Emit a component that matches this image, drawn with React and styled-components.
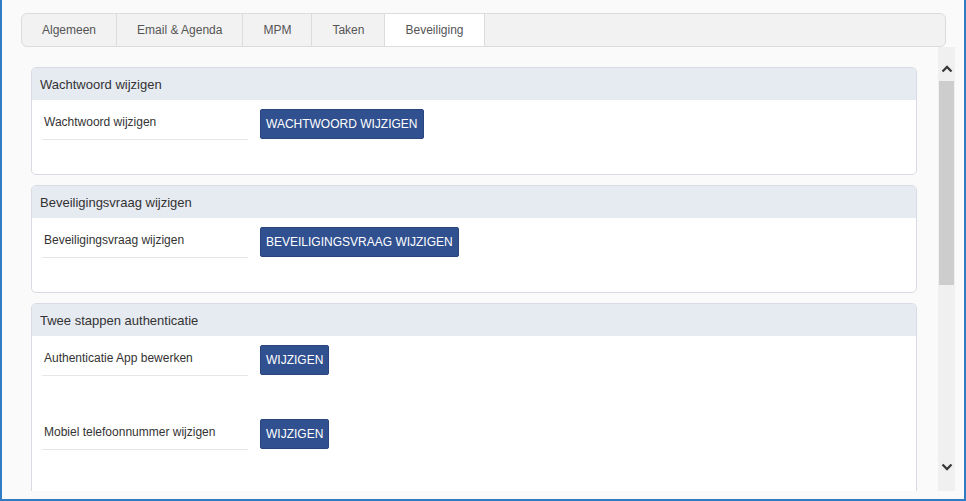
import React from "react";
import styled, { createGlobalStyle } from "styled-components";

const Global = createGlobalStyle`
  html, body { margin: 0; padding: 0; background: #fff; }
  * { box-sizing: border-box; }
  body { font-family: "Liberation Sans", Arial, sans-serif; }
`;

const Frame = styled.div`
  width: 966px;
  height: 501px;
  background: #fafafa;
  border-left: 2px solid #2f7bc4;
  border-right: 2px solid #2f7bc4;
  border-bottom: 2px solid #2f7bc4;
  padding: 13px 9px 0 19px;
  display: flex;
  flex-direction: column;
  overflow: hidden;
`;

const TabBar = styled.div`
  display: flex;
  height: 34px;
  margin-right: 9px;
  background: #f2f2f2;
  border: 1px solid #dcdcdc;
  border-radius: 6px;
  overflow: hidden;
  flex-shrink: 0;
`;

const Tab = styled.div`
  display: flex;
  align-items: center;
  padding: 0 20px;
  font-size: 12px;
  color: #555;
  border-right: 1px solid #dcdcdc;
  background: ${(p) => (p.$active ? "#fff" : "transparent")};
`;

const Body = styled.div`
  flex: 1;
  display: flex;
  min-height: 0;
  padding-bottom: 8px;
`;

const Scroller = styled.div`
  flex: 1;
  overflow: hidden;
  padding: 20px 21px 0 10px;
  display: flex;
  flex-direction: column;
  gap: 10px;
`;

const Panel = styled.section`
  border: 1px solid #d8dce2;
  border-radius: 5px;
  background: #fff;
  flex-shrink: 0;
  overflow: hidden;
`;

const PanelHeader = styled.div`
  height: 32px;
  background: #e6eaf1;
  display: flex;
  align-items: center;
  padding: 0 8px;
  font-size: 13px;
  color: #333;
`;

const PanelBody = styled.div`
  display: flex;
  flex-direction: column;
  gap: 43px;
  padding: 9px 10px ${(p) => p.$bottom}px 10px;
`;

const Row = styled.div`
  display: flex;
  align-items: flex-start;
  gap: 12px;
`;

const Label = styled.div`
  width: 206px;
  height: 31px;
  border-bottom: 1px solid #e6e6e6;
  padding: 6px 0 0 2px;
  font-size: 12px;
  color: #333;
`;

const Button = styled.button`
  height: 30px;
  padding: 0 5px;
  background: #30508f;
  border: 1px solid #2a467f;
  border-radius: 2px;
  color: #fff;
  font-family: "Liberation Sans", Arial, sans-serif;
  font-size: 12px;
  text-transform: uppercase;
  cursor: pointer;
`;

const Scrollbar = styled.div`
  width: 17px;
  background: #f0f0f0;
  display: flex;
  flex-direction: column;
  align-items: center;
  flex-shrink: 0;
`;

const Arrow = styled.div`
  height: 34px;
  width: 100%;
  display: flex;
  justify-content: center;
  align-items: ${(p) => (p.$up ? "flex-end" : "flex-start")};
  padding: ${(p) => (p.$up ? "0 0 8px" : "6px 0 0")};
`;

const Thumb = styled.div`
  width: 15px;
  height: 204px;
  background: #cdcdcd;
`;

const Spacer = styled.div`
  flex: 1;
`;

const Chevron = ({ up }) => (
  <svg width="12" height="8" viewBox="0 0 12 8">
    <path
      d={up ? "M1.5 6.5 L6 2 L10.5 6.5" : "M1.5 1.5 L6 6 L10.5 1.5"}
      fill="none"
      stroke="#3a3a3a"
      strokeWidth="2.3"
    />
  </svg>
);

const sections = [
  { title: "Wachtwoord wijzigen", bottom: 34, rows: [["Wachtwoord wijzigen", "Wachtwoord wijzigen"]] },
  { title: "Beveiligingsvraag wijzigen", bottom: 34, rows: [["Beveiligingsvraag wijzigen", "Beveiligingsvraag wijzigen"]] },
  {
    title: "Twee stappen authenticatie",
    bottom: 60,
    rows: [
      ["Authenticatie App bewerken", "Wijzigen"],
      ["Mobiel telefoonnummer wijzigen", "Wijzigen"],
    ],
  },
];

const tabs = ["Algemeen", "Email & Agenda", "MPM", "Taken", "Beveiliging"];

export default function App() {
  return (
    <>
      <Global />
      <Frame>
        <TabBar>
          {tabs.map((t) => (
            <Tab key={t} $active={t === "Beveiliging"}>
              {t}
            </Tab>
          ))}
        </TabBar>
        <Body>
          <Scroller>
            {sections.map((s) => (
              <Panel key={s.title}>
                <PanelHeader>{s.title}</PanelHeader>
                <PanelBody $bottom={s.bottom}>
                  {s.rows.map(([label, btn]) => (
                    <Row key={label}>
                      <Label>{label}</Label>
                      <Button>{btn}</Button>
                    </Row>
                  ))}
                </PanelBody>
              </Panel>
            ))}
          </Scroller>
          <Scrollbar>
            <Arrow $up>
              <Chevron up />
            </Arrow>
            <Thumb />
            <Spacer />
            <Arrow>
              <Chevron />
            </Arrow>
          </Scrollbar>
        </Body>
      </Frame>
    </>
  );
}
